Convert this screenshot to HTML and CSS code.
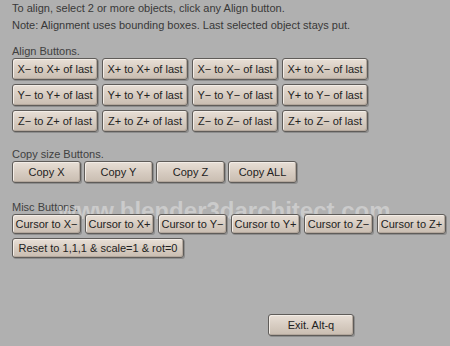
FILE: index.html
```html
<!DOCTYPE html>
<html>
<head>
<meta charset="utf-8">
<link rel="stylesheet" href="styles.css">
</head>
<body>
<div class="page">
  <p class="intro">To align, select 2 or more objects, click any Align button.</p>
  <p class="intro">Note: Alignment uses bounding boxes. Last selected object stays put.</p>

  <div class="label label-align">Align Buttons.</div>
  <div class="grid align">
    <button class="btn">X− to X+ of last</button>
    <button class="btn">X+ to X+ of last</button>
    <button class="btn">X− to X− of last</button>
    <button class="btn">X+ to X− of last</button>
    <button class="btn">Y− to Y+ of last</button>
    <button class="btn">Y+ to Y+ of last</button>
    <button class="btn">Y− to Y− of last</button>
    <button class="btn">Y+ to Y− of last</button>
    <button class="btn">Z− to Z+ of last</button>
    <button class="btn">Z+ to Z+ of last</button>
    <button class="btn">Z− to Z− of last</button>
    <button class="btn">Z+ to Z− of last</button>
  </div>

  <div class="label label-copy">Copy size Buttons.</div>
  <div class="row copy">
    <button class="btn">Copy X</button>
    <button class="btn">Copy Y</button>
    <button class="btn">Copy Z</button>
    <button class="btn">Copy ALL</button>
  </div>

  <div class="label label-misc">Misc Buttons.</div>
  <div class="row misc">
    <button class="btn">Cursor to X−</button>
    <button class="btn">Cursor to X+</button>
    <button class="btn">Cursor to Y−</button>
    <button class="btn">Cursor to Y+</button>
    <button class="btn">Cursor to Z−</button>
    <button class="btn">Cursor to Z+</button>
  </div>
  <div class="row misc2">
    <button class="btn reset">Reset to 1,1,1 &amp; scale=1 &amp; rot=0</button>
  </div>

  <div class="row exit-row">
    <button class="btn exit">Exit. Alt-q</button>
  </div>

  <div class="watermark">www.blender3darchitect.com</div>
</div>
</body>
</html>
```

FILE: styles.css
```css
html, body {
  margin: 0;
  padding: 0;
}
body {
  width: 450px;
  height: 346px;
  background: #b0b0b0;
  font-family: "Liberation Sans", Arial, sans-serif;
  font-size: 11px;
  color: #3a3a3a;
  overflow: hidden;
}
.page {
  position: relative;
  padding: 0 0 0 12px;
  height: 346px;
  box-sizing: border-box;
}
.intro {
  margin: 0;
  line-height: 17px;
  color: #383838;
}
.label {
  line-height: 14px;
  color: #404040;
}
.label-align { margin-top: 10px; }
.label-copy { margin-top: 15px; }
.label-misc { margin-top: 17px; }

.btn {
  position: relative;
  z-index: 1;
  margin: 0;
  padding: 0;
  font-family: "Liberation Sans", Arial, sans-serif;
  font-size: 11px;
  color: #222222;
  border: 1px solid #5f5c59;
  border-radius: 3px;
  background: linear-gradient(#e8dfd6, #d6cbc0 55%, #c9bdb1);
  box-shadow: inset 1px 1px 0 #f3ede7, inset -1px -1px 0 #b3a79c, 1px 1px 0 #8d8d8d;
  height: 22px;
  box-sizing: border-box;
  white-space: nowrap;
  text-align: center;
}

.grid.align {
  display: grid;
  grid-template-columns: repeat(4, 86px);
  grid-auto-rows: 22px;
  column-gap: 4px;
  row-gap: 4px;
}
.row {
  display: flex;
}
.copy {
  gap: 3px;
}
.copy .btn {
  width: 69px;
}
.misc {
  gap: 4px;
}
.misc .btn {
  width: 69px;
  height: 20px;
}
.misc2 {
  margin-top: 4px;
}
.reset {
  width: 172px;
  height: 20px;
}
.exit-row {
  margin-top: 56px;
  padding-left: 256px;
}
.exit {
  width: 86px;
}
.watermark {
  position: absolute;
  left: 58px;
  top: 197px;
  z-index: 0;
  font-family: "Liberation Sans", Arial, sans-serif;
  font-weight: bold;
  font-size: 24px;
  line-height: 28px;
  color: rgba(255, 255, 255, 0.35);
  white-space: nowrap;
  pointer-events: none;
}
```
